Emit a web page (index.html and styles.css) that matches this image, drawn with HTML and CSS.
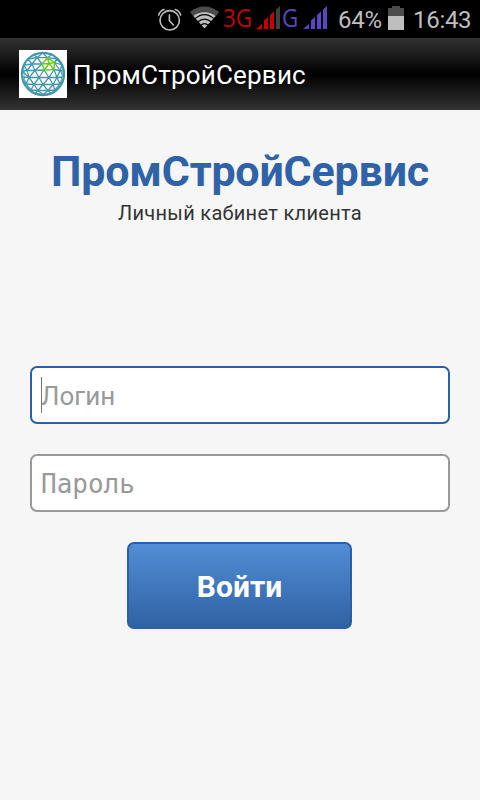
FILE: index.html
```html
<!DOCTYPE html>
<html lang="ru">
<head>
    <meta charset="UTF-8">
    <meta name="viewport" content="width=device-width, initial-scale=1.0">
    <title>ПромСтройСервис</title>
    <link rel="stylesheet" href="styles.css">
</head>
<body>
    <div class="status-bar">
        <svg class="alarm" width="24" height="24" viewBox="0 0 24 24" fill="none" stroke="#bebebe" stroke-width="1.6" stroke-linecap="round">
            <circle cx="11.700" cy="13.300" r="9.700"/>
            <path d="M11.400 8v5.800l4 4.200M.7 8C1.500 5.500 3.500 3.300 6 2.500M22.700 8c-.8-2.500-2.800-4.700-5.300-5.500"/>
        </svg>
        <svg class="wifi" width="30" height="23" viewBox="0 0 30 23">
            <path d="M0 6C8-1.500 21-1.500 29 6L26 10C19.500 4.200 9.500 4.200 3 10z" fill="#4c4c4c"/>
            <path d="M3.300 10C9.500 4.500 19.500 4.500 25.700 10L14.500 22.500z" fill="#bebebe"/>
            <path d="M5 12.700C11 7.500 18 7.500 24 12.700M7.500 16C12 12.300 17 12.300 21.500 16M10.500 19.300C13 17.200 16 17.200 18.500 19.300" fill="none" stroke="#000" stroke-width="1.100"/>
        </svg>
        <span class="net net-3g">3G</span>
        <svg class="signal signal-3g" width="24" height="23" viewBox="0 0 24 23" fill="#c40000">
            <path d="M0 23l6-5v5zM8 23v-8.500l4-3.500v12zM14 23V9l4-3.500V23z"/>
            <path d="M20 23V3.500L24 0v23z" fill="#404040"/>
        </svg>
        <span class="net net-g">G</span>
        <svg class="signal signal-g" width="24" height="23" viewBox="0 0 24 23" fill="#5a46be">
            <path d="M0 23l6-5v5zM8 23v-8.500l4-3.500v12zM14 23V9l4-3.500V23zM20 23V3.500L24 0v23z"/>
        </svg>
        <span class="percent">64%</span>
        <svg class="battery" width="16" height="24" viewBox="0 0 16 24">
            <path d="M0 2h4V0h8v2h4v8H0z" fill="#4c4c4c"/>
            <path d="M0 10h16v14H0z" fill="#bebebe"/>
        </svg>
        <span class="clock">16:43</span>
    </div>

    <div class="action-bar">
        <svg class="logo" width="48" height="48" viewBox="0 0 48 48" fill="none" stroke-linejoin="round">
            <rect width="48" height="48" fill="#fff"/>
            <g stroke="#4598ab" stroke-width="1.300">
                <circle cx="24" cy="24" r="21.200" stroke-width="1.900"/>
                <path d="M15 4.500L24 3L33 4.500M9 9L18 7.500L28.500 7.700L38 9M5 15L13 14L23 14M35.500 12.500L43 15M3 21L8 20.500L16 20.500L25 20M35 19.500L41 20.500L45 21M3 27L10 27.500L20 27.500L30 27.500L38 27.500L45 27M4 32L7 34L15 34.500L24 34.500L34 34.500L41 34L44 32M9 39L12 40L19 40.500L29 40.500L36 40L39 39M16 43.500L24 44.500L32 43.500"/>
                <path d="M9 9L15 4.500L18 7.500L24 3L28.500 7.700L33 4.500L38 9M5 15L9 9L13 14L18 7.500L23 14M35.500 12.500L38 9L43 15"/>
                <path d="M3 21L5 15L8 20.500L13 14L16 20.500L23 14M35.500 12.500L41 20.500L43 15L45 21"/>
                <path d="M3 27L3 21L10 27.500L8 20.500M10 27.500L16 20.500L20 27.500L25 20L30 27.500L35 19.500L38 27.500L41 20.500L45 27L45 21"/>
                <path d="M3 27L7 34L10 27.500L15 34.500L20 27.500L24 34.500L30 27.500L34 34.500L38 27.500L41 34L45 27"/>
                <path d="M7 34L12 40L15 34.500L19 40.500L24 34.500L29 40.500L34 34.500L36 40L41 34M12 40L16 43.500L19 40.500L24 44.500L29 40.500L32 43.500L36 40"/>
                <path d="M5 15C4.500 24 5 28 7 34M43 15C43.500 24 43 28 41 34" stroke-width=".8"/>
            </g>
            <path d="M28.500 7.700L35.500 12.500L35 19.500L25.500 20L23 14zM30 13.500L28.500 7.700M30 13.500L35.500 12.500M30 13.500L35 19.500M30 13.500L25.500 20M30 13.500L23 14" stroke="#5fd01c" stroke-width="1.500"/>
        </svg>
        <span class="app-name">ПромСтройСервис</span>
    </div>

    <div class="container">
        <h1>ПромСтройСервис</h1>
        <p class="subtitle">Личный кабинет клиента</p>
        <form class="login-form">
            <div class="field field-active">
                <span class="cursor"></span>
                <input class="login" type="text" placeholder="Логин">
            </div>
            <div class="field">
                <input class="password" type="password" placeholder="Пароль">
            </div>
            <button type="button">Войти</button>
        </form>
    </div>
</body>
</html>
```
FILE: styles.css
```css
* {
    box-sizing: border-box;
}

body {
    margin: 0;
    min-height: 100vh;
    font-family: Roboto, "Noto Sans", sans-serif;
    background: #f6f6f6;
    color: #333;
}

.status-bar {
    display: flex;
    align-items: flex-start;
    height: 38px;
    padding-left: 158px;
    background: #000;
    color: #bebebe;
    line-height: 40px;
    white-space: nowrap;
}

.status-bar svg,
.status-bar span {
    flex: none;
}

.alarm {
    margin-top: 7px;
}

.wifi {
    margin: 6px 0 0 8px;
}

.net {
    font-family: "Open Sans", sans-serif;
    font-size: 26px;
    line-height: 35px;
    transform: scaleX(0.86);
    transform-origin: left;
}

.net-3g {
    width: 33px;
    margin-left: 3px;
    color: #c40000;
}

.net-g {
    width: 21px;
    margin-left: 2px;
    color: #5a46be;
}

.signal {
    margin-top: 6px;
}

.percent {
    width: 50px;
    margin-left: 11px;
    font-size: 24px;
    letter-spacing: -0.3px;
}

.battery {
    margin-top: 6px;
}

.clock {
    margin-left: 9px;
    font-size: 24px;
    letter-spacing: -0.3px;
}

.action-bar {
    display: flex;
    align-items: center;
    height: 72px;
    padding-left: 19px;
    background: linear-gradient(#333, #000 50%, #333);
}

.app-name {
    margin-left: 6px;
    padding-top: 2px;
    font-size: 26px;
    letter-spacing: 0.2px;
    color: #fff;
}

.container {
    padding: 36px 30px 0;
    text-align: center;
}

h1 {
    margin: 0;
    font-size: 43px;
    line-height: 50px;
    letter-spacing: -0.2px;
    color: #2f62a6;
    white-space: nowrap;
}

.subtitle {
    margin: 5px 0 0;
    font-size: 20px;
    line-height: 24px;
    letter-spacing: 0.3px;
}

.login-form {
    margin-top: 141px;
}

.field {
    position: relative;
    height: 58px;
    margin-bottom: 30px;
    border: 2px solid #999;
    border-radius: 7px;
    background: #fff;
}

.field-active {
    border-color: #2a60a8;
}

.cursor {
    position: absolute;
    left: 9px;
    top: 9px;
    width: 1px;
    height: 36px;
    background: #777;
}

input {
    display: block;
    width: 100%;
    height: 54px;
    padding: 2px 9px 0;
    border: none;
    outline: none;
    background: none;
    font-family: Roboto, sans-serif;
    font-size: 26px;
}

input::placeholder {
    color: #999;
}

.password {
    font-family: "DejaVu Sans Mono", monospace;
}

button {
    display: block;
    width: 225px;
    height: 87px;
    margin: 0 auto 0 97px;
    padding: 2px 0 0;
    border: 2px solid #2a60a8;
    border-radius: 7px;
    background: linear-gradient(#528dd5, #3062a4);
    color: #fff;
    font-family: Roboto, sans-serif;
    font-size: 30px;
    font-weight: bold;
}
```
